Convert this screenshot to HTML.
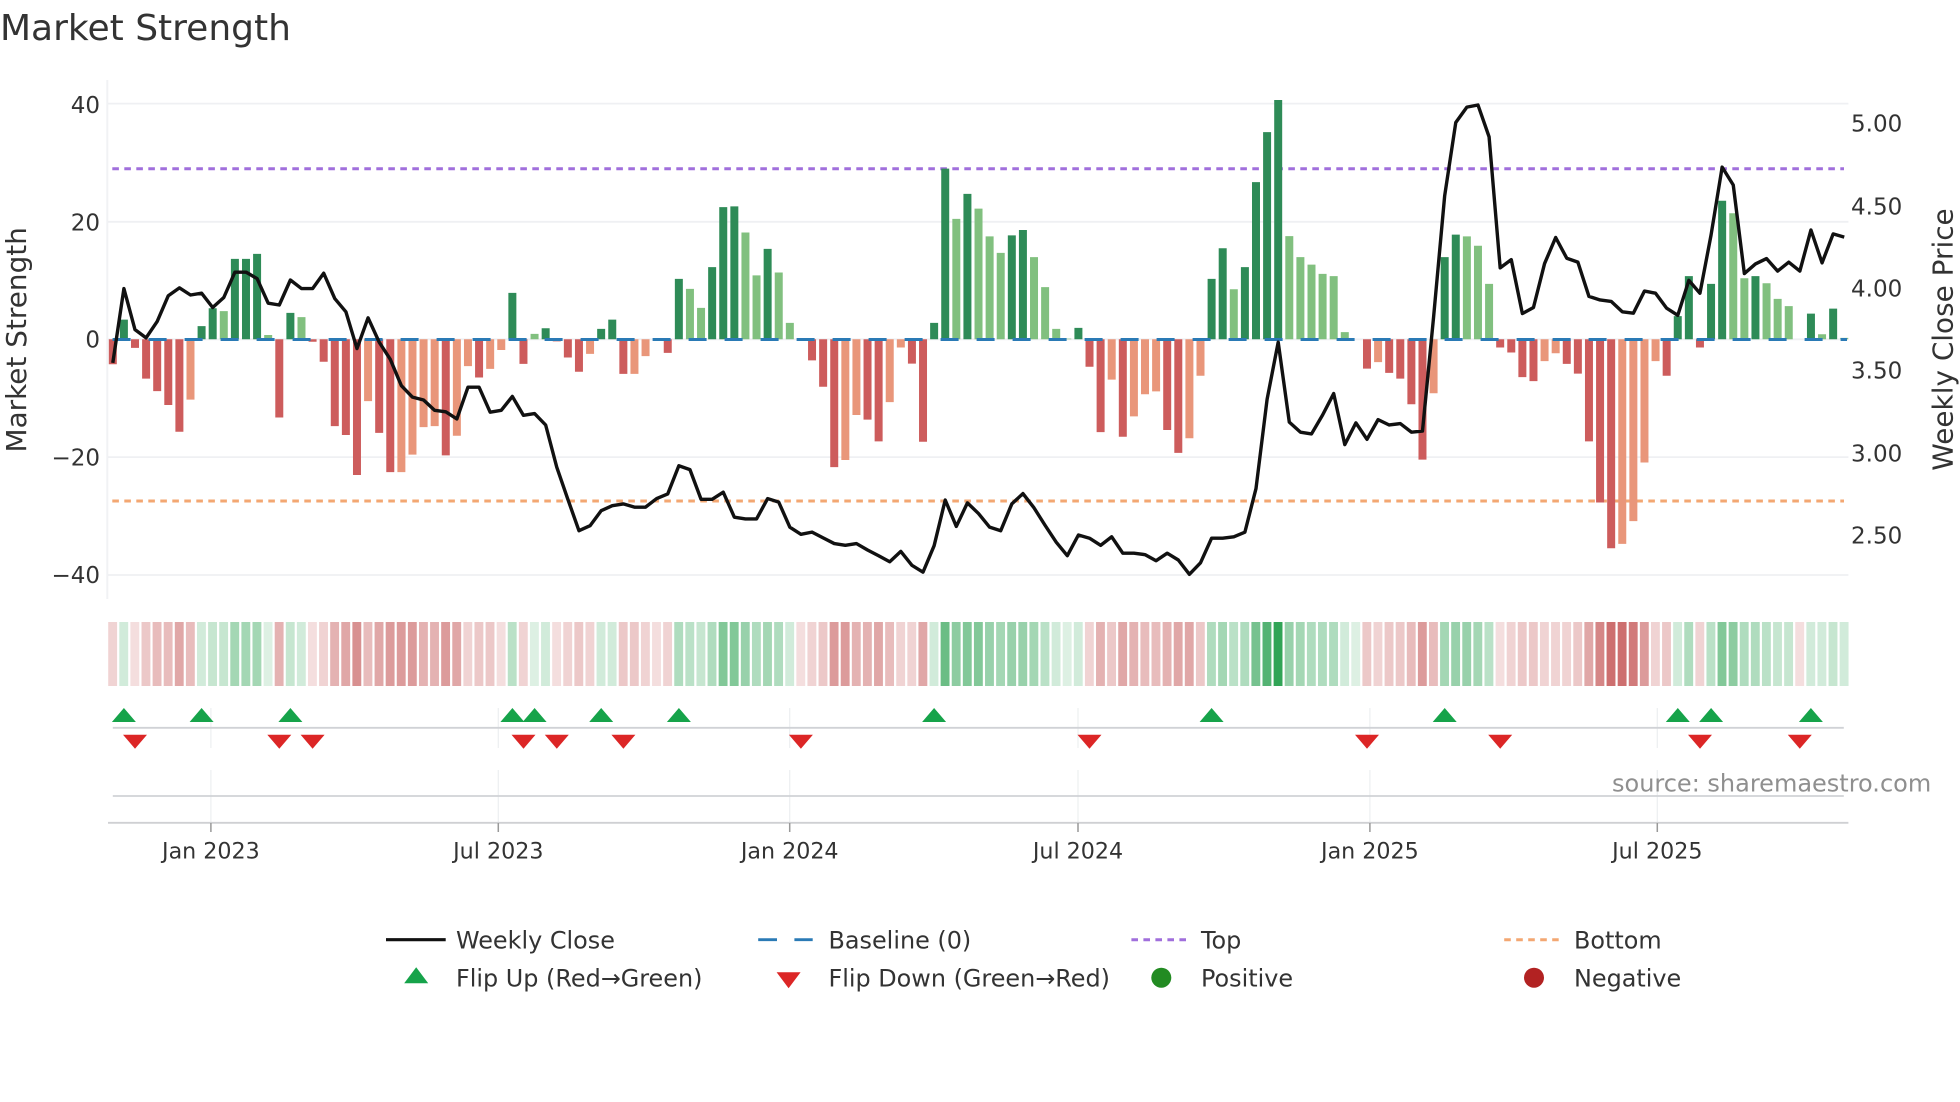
<!DOCTYPE html>
<html><head><meta charset="utf-8"><title>Market Strength</title>
<style>html,body{margin:0;padding:0;background:#fff}svg{display:block}text{font-family:"DejaVu Sans",sans-serif;fill:#333}</style>
</head><body>
<svg xmlns="http://www.w3.org/2000/svg" width="1960" height="1102" viewBox="0 0 1960 1102">
<rect width="1960" height="1102" fill="#fff"/>
<text x="0" y="40" font-size="36">Market Strength</text>
<!-- grid -->
<path d="M107.3 80V599" stroke="#f1f2f4" stroke-width="2" fill="none"/>
<path d="M108 103.6H1848.4M108 221.8H1848.4M108 339.3H1848.4M108 457.1H1848.4M108 575H1848.4" stroke="#eff0f3" stroke-width="1.8" fill="none"/>
<!-- threshold lines -->
<path d="M112.3 168.7H1844" stroke="#a06fdc" stroke-width="3" stroke-dasharray="6.6 5.4" fill="none"/>
<path d="M112.3 501H1844" stroke="#f3a772" stroke-width="3" stroke-dasharray="6.6 5.4" fill="none"/>
<!-- bars -->
<g transform="translate(112.8 60) scale(11.099 .35714)" stroke-width=".72" fill="none">
<path stroke="#cd5c5c" d="M0 782V852M2 782V806M3 782V892M4 782V927M5 782V966M6 782V1041M15 782V1001M18 782V789M19 782V845M20 782V1025M21 782V1050M22 782V1162M24 782V1044M25 782V1154M30 782V1107M33 782V889M37 782V851M40 782V788M41 782V833M42 782V873M46 782V879M50 782V820M63 782V841M64 782V915M65 782V1140M68 782V1007M69 782V1068M72 782V850M73 782V1069M88 782V859M89 782V1042M91 782V1055M95 782V1036M96 782V1100M113 782V864M115 782V876M116 782V892M117 782V964M118 782V1119M125 782V805M126 782V819M127 782V888M128 782V899M131 782V851M132 782V878M133 782V1068M134 782V1239M135 782V1367M140 782V884M143 782V805"/>
<path stroke="#e9967a" d="M7 782V951M23 782V955M26 782V1154M27 782V1105M28 782V1028M29 782V1025M31 782V1052M32 782V857M34 782V865M35 782V812M43 782V823M47 782V879M48 782V829M66 782V1120M67 782V994M70 782V958M71 782V805M90 782V895M92 782V998M93 782V936M94 782V928M97 782V1059M98 782V884M114 782V846M119 782V933M129 782V843M130 782V821M136 782V1355M137 782V1291M138 782V1127M139 782V843"/>
<path stroke="#2e8b57" d="M1 782V727M8 782V745M9 782V695M11 782V557M12 782V557M13 782V543M16 782V708M36 782V652M39 782V751M44 782V753M45 782V727M51 782V613M54 782V580M55 782V412M56 782V410M59 782V529M74 782V736M75 782V304M77 782V375M81 782V491M82 782V476M87 782V750M99 782V613M100 782V527M102 782V580M103 782V342M104 782V202M105 782V112M120 782V552M121 782V489M141 782V717M142 782V605M144 782V627M145 782V394M148 782V605M153 782V710M155 782V696"/>
<path stroke="#81c07f" d="M10 782V703M14 782V770M17 782V720M38 782V767M52 782V641M53 782V694M57 782V483M58 782V603M60 782V595M61 782V736M76 782V445M78 782V416M79 782V494M80 782V540M83 782V552M84 782V636M85 782V753M86 782V780M101 782V642M106 782V493M107 782V552M108 782V573M109 782V599M110 782V605M111 782V762M122 782V494M123 782V520M124 782V627M146 782V429M147 782V611M149 782V625M150 782V669M151 782V689M154 782V768M156 782V778"/>
</g>
<!-- baseline -->
<path d="M112.6 339.5H1847" stroke="#2a7ab5" stroke-width="3" stroke-dasharray="18 18" fill="none"/>
<!-- close line -->
<g transform="translate(112.8 60) scale(11.099 .35714)">
<polyline fill="none" stroke="#111" stroke-width="3.4" stroke-linejoin="round" vector-effect="non-scaling-stroke" points="0,848 1,640 2,755 3,778 4,732 5,660 6,638 7,658 8,653 9,693 10,665 11,594 12,594 13,612 14,681 15,686 16,616 17,640 18,640 19,597 20,668 21,705 22,808 23,722 24,790 25,838 26,912 27,944 28,952 29,981 30,985 31,1005 32,916 33,916 34,986 35,981 36,942 37,995 38,990 39,1022 40,1140 41,1230 42,1318 43,1304 44,1262 45,1248 46,1243 47,1252 48,1252 49,1228 50,1215 51,1136 52,1147 53,1230 54,1230 55,1210 56,1280 57,1285 58,1285 59,1228 60,1238 61,1308 62,1328 63,1322 64,1338 65,1354 66,1359 67,1354 68,1372 69,1388 70,1405 71,1376 72,1415 73,1434 74,1360 75,1232 76,1306 77,1240 78,1270 79,1308 80,1318 81,1243 82,1214 83,1254 84,1303 85,1350 86,1388 87,1330 88,1339 89,1359 90,1335 91,1381 92,1381 93,1385 94,1402 95,1381 96,1400 97,1440 98,1408 99,1339 100,1339 101,1335 102,1322 103,1200 104,950 105,790 106,1014 107,1042 108,1047 109,994 110,934 111,1077 112,1016 113,1062 114,1007 115,1022 116,1018 117,1042 118,1039 119,720 120,380 121,175 122,132 123,126 124,215 125,582 126,559 127,710 128,693 129,570 130,497 131,555 132,566 133,662 134,672 135,676 136,705 137,709 138,647 139,653 140,695 141,715 142,617 143,653 144,490 145,300 146,350 147,598 148,571 149,556 150,591 151,566 152,591 153,476 154,568 155,487 156,496"/>
</g>
<!-- y ticks -->
<g font-size="23" text-anchor="end">
<text x="100" y="113">40</text><text x="100" y="230.6">20</text><text x="100" y="347.5">0</text><text x="100" y="465.4">−20</text><text x="100" y="583">−40</text>
</g>
<g font-size="23">
<text x="1851" y="131.4">5.00</text><text x="1851" y="214.3">4.50</text><text x="1851" y="296.4">4.00</text><text x="1851" y="378.6">3.50</text><text x="1851" y="461.4">3.00</text><text x="1851" y="543.6">2.50</text>
</g>
<text font-size="27.9" text-anchor="middle" transform="translate(26 339.8) rotate(-90)">Market Strength</text>
<text font-size="27.9" text-anchor="middle" transform="translate(1952.5 339.5) rotate(-90)">Weekly Close Price</text>
<!-- heat strip -->
<g transform="translate(112.65 622) scale(11.099 64)" stroke-width=".8" fill="none">
<g stroke="#1b9a44">
<path stroke-opacity=".15" d="M14 0V1M38 0V1M86 0V1M112 0V1"/>
<path stroke-opacity=".2" d="M1 0V1M8 0V1M17 0V1M39 0V1M44 0V1M45 0V1M61 0V1M74 0V1M85 0V1M87 0V1M111 0V1M141 0V1M153 0V1M154 0V1M156 0V1"/>
<path stroke-opacity=".25" d="M9 0V1M10 0V1M16 0V1M53 0V1M150 0V1M151 0V1M155 0V1"/>
<path stroke-opacity=".3" d="M36 0V1M52 0V1M84 0V1M101 0V1M124 0V1M144 0V1M149 0V1"/>
<path stroke-opacity=".35" d="M51 0V1M54 0V1M58 0V1M60 0V1M99 0V1M102 0V1M108 0V1M109 0V1M110 0V1M142 0V1M147 0V1M148 0V1"/>
<path stroke-opacity=".4" d="M11 0V1M12 0V1M13 0V1M59 0V1M80 0V1M83 0V1M100 0V1M107 0V1M120 0V1M123 0V1"/>
<path stroke-opacity=".45" d="M57 0V1M79 0V1M81 0V1M82 0V1M106 0V1M121 0V1M122 0V1"/>
<path stroke-opacity=".5" d="M76 0V1M146 0V1"/>
<path stroke-opacity=".55" d="M55 0V1M56 0V1M77 0V1M78 0V1M145 0V1"/>
<path stroke-opacity=".6" d="M103 0V1"/>
<path stroke-opacity=".65" d="M75 0V1"/>
<path stroke-opacity=".75" d="M104 0V1"/>
<path stroke-opacity=".9" d="M105 0V1"/>
</g>
<g stroke="#b22222">
<path stroke-opacity=".15" d="M2 0V1M18 0V1M35 0V1M40 0V1M49 0V1M62 0V1M125 0V1M152 0V1"/>
<path stroke-opacity=".2" d="M0 0V1M19 0V1M32 0V1M37 0V1M41 0V1M43 0V1M48 0V1M50 0V1M63 0V1M71 0V1M72 0V1M88 0V1M114 0V1M126 0V1M129 0V1M130 0V1M131 0V1M139 0V1M143 0V1"/>
<path stroke-opacity=".25" d="M3 0V1M33 0V1M34 0V1M42 0V1M46 0V1M47 0V1M64 0V1M90 0V1M98 0V1M113 0V1M115 0V1M116 0V1M127 0V1M128 0V1M132 0V1M140 0V1"/>
<path stroke-opacity=".3" d="M4 0V1M5 0V1M7 0V1M23 0V1M70 0V1M93 0V1M94 0V1M117 0V1M119 0V1"/>
<path stroke-opacity=".35" d="M15 0V1M20 0V1M28 0V1M29 0V1M67 0V1M68 0V1M89 0V1M92 0V1M95 0V1"/>
<path stroke-opacity=".4" d="M6 0V1M21 0V1M24 0V1M31 0V1M69 0V1M73 0V1M91 0V1M96 0V1M97 0V1M133 0V1"/>
<path stroke-opacity=".45" d="M25 0V1M26 0V1M27 0V1M30 0V1M65 0V1M66 0V1M118 0V1M138 0V1"/>
<path stroke-opacity=".5" d="M22 0V1"/>
<path stroke-opacity=".55" d="M134 0V1"/>
<path stroke-opacity=".6" d="M137 0V1"/>
<path stroke-opacity=".65" d="M135 0V1M136 0V1"/>
</g>
</g>
<!-- lower panels -->
<path d="M210.9 708V748M210.9 770V822M498.3 708V748M498.3 770V822M789.7 708V748M789.7 770V822M1078 708V748M1078 770V822M1369.9 708V748M1369.9 770V822M1657.3 708V748M1657.3 770V822" stroke="#eef0f2" stroke-width="1.3" fill="none"/>
<path d="M112.8 727.8H1843.8M112.8 796H1843.8" stroke="#d0d2d6" stroke-width="1.8" fill="none"/>
<path d="M108 822.8H1848.4" stroke="#cfd0d3" stroke-width="1.8" fill="none"/>
<path d="M210.9 823V832M498.3 823V832M789.7 823V832M1078 823V832M1369.9 823V832M1657.3 823V832" stroke="#999" stroke-width="1.5" fill="none"/>
<path fill="#16a34a" d="M123.9 708l12 14h-24zM201.6 708l12 14h-24zM290.4 708l12 14h-24zM512.4 708l12 14h-24zM534.6 708l12 14h-24zM601.2 708l12 14h-24zM678.9 708l12 14h-24zM934.1 708l12 14h-24zM1211.6 708l12 14h-24zM1444.7 708l12 14h-24zM1677.8 708l12 14h-24zM1711.1 708l12 14h-24zM1810.9 708l12 14h-24z"/>
<path fill="#dc2626" d="M123 734.7h24l-12 14zM267.3 734.7h24l-12 14zM300.6 734.7h24l-12 14zM511.5 734.7h24l-12 14zM544.8 734.7h24l-12 14zM611.4 734.7h24l-12 14zM788.9 734.7h24l-12 14zM1077.5 734.7h24l-12 14zM1355 734.7h24l-12 14zM1488.2 734.7h24l-12 14zM1688 734.7h24l-12 14zM1787.8 734.7h24l-12 14z"/>
<g font-size="22.2" text-anchor="middle">
<text x="210.9" y="858.5">Jan 2023</text><text x="498.3" y="858.5">Jul 2023</text><text x="789.7" y="858.5">Jan 2024</text><text x="1078" y="858.5">Jul 2024</text><text x="1369.9" y="858.5">Jan 2025</text><text x="1657.3" y="858.5">Jul 2025</text>
</g>
<text x="1612" y="791.5" font-size="24" style="fill:#8f8f8f">source: sharemaestro.com</text>
<!-- legend -->
<path d="M386 939.7H445.7" stroke="#111" stroke-width="3.2" fill="none"/>
<path d="M758.2 939.7H777M794.4 939.7H812.7" stroke="#2a7ab5" stroke-width="2.8" fill="none"/>
<path d="M1131.4 939.7H1186.3" stroke="#a06fdc" stroke-width="3" stroke-dasharray="6.6 5.4" fill="none"/>
<path d="M1504.2 939.7H1558.7" stroke="#f3a772" stroke-width="3" stroke-dasharray="6.6 5.4" fill="none"/>
<path fill="#16a34a" d="M416.2 967.3l12 16h-24z"/>
<path fill="#dc2626" d="M776.6 972.3h24l-12 16z"/>
<circle cx="1161.3" cy="977.7" r="10" fill="#228b22"/>
<circle cx="1534" cy="977.7" r="10" fill="#b22222"/>
<g font-size="23.9">
<text x="456" y="948.3">Weekly Close</text><text x="828.5" y="948.3">Baseline (0)</text><text x="1201" y="948.3">Top</text><text x="1574" y="948.3">Bottom</text>
<text x="456" y="986.5">Flip Up (Red→Green)</text><text x="828.5" y="986.5">Flip Down (Green→Red)</text><text x="1201" y="986.5">Positive</text><text x="1574" y="986.5">Negative</text>
</g>
</svg>
</body></html>
